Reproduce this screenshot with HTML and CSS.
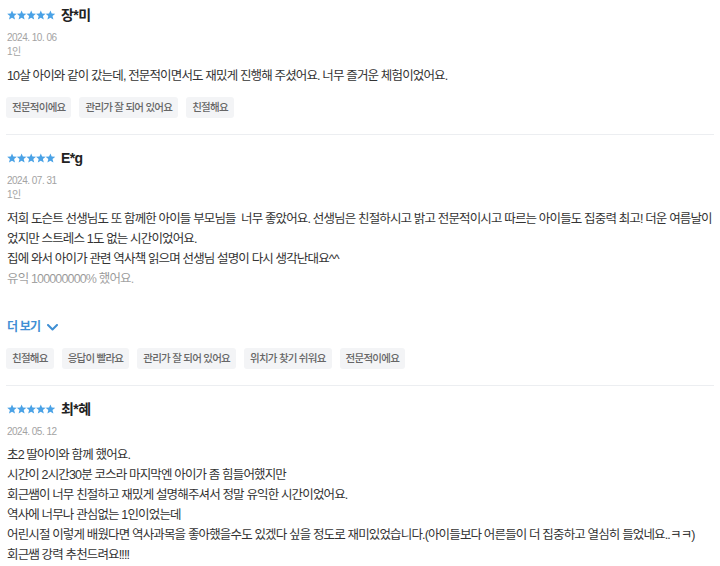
FILE: index.html
```html
<!DOCTYPE html>
<html lang="ko">
<head>
<meta charset="utf-8">
<title>후기</title>
<link rel="stylesheet" href="styles.css">
</head>
<body>
<div class="reviews">
  <section class="review">
    <div class="head">
      <svg class="stars" viewBox="0 0 48 10" width="48" height="10"><g fill="#4aa2e6"><polygon points="5,0.4 6.3,3.6 9.8,3.8 7.1,6.1 8,9.6 5,7.7 2,9.6 2.9,6.1 0.2,3.8 3.7,3.6"/><polygon transform="translate(9.6 0)" points="5,0.4 6.3,3.6 9.8,3.8 7.1,6.1 8,9.6 5,7.7 2,9.6 2.9,6.1 0.2,3.8 3.7,3.6"/><polygon transform="translate(19.2 0)" points="5,0.4 6.3,3.6 9.8,3.8 7.1,6.1 8,9.6 5,7.7 2,9.6 2.9,6.1 0.2,3.8 3.7,3.6"/><polygon transform="translate(28.8 0)" points="5,0.4 6.3,3.6 9.8,3.8 7.1,6.1 8,9.6 5,7.7 2,9.6 2.9,6.1 0.2,3.8 3.7,3.6"/><polygon transform="translate(38.4 0)" points="5,0.4 6.3,3.6 9.8,3.8 7.1,6.1 8,9.6 5,7.7 2,9.6 2.9,6.1 0.2,3.8 3.7,3.6"/></g></svg>
      <span class="name">장*미</span>
    </div>
    <div class="meta">
      <div>2024. 10. 06</div>
      <div>1인</div>
    </div>
    <div class="body">
      <p>10살 아이와 같이 갔는데, 전문적이면서도 재밌게 진행해 주셨어요. 너무 즐거운 체험이었어요.</p>
    </div>
    <ul class="tags">
      <li>전문적이에요</li>
      <li>관리가 잘 되어 있어요</li>
      <li>친절해요</li>
    </ul>
  </section>

  <section class="review">
    <div class="head">
      <svg class="stars" viewBox="0 0 48 10" width="48" height="10"><g fill="#4aa2e6"><polygon points="5,0.4 6.3,3.6 9.8,3.8 7.1,6.1 8,9.6 5,7.7 2,9.6 2.9,6.1 0.2,3.8 3.7,3.6"/><polygon transform="translate(9.6 0)" points="5,0.4 6.3,3.6 9.8,3.8 7.1,6.1 8,9.6 5,7.7 2,9.6 2.9,6.1 0.2,3.8 3.7,3.6"/><polygon transform="translate(19.2 0)" points="5,0.4 6.3,3.6 9.8,3.8 7.1,6.1 8,9.6 5,7.7 2,9.6 2.9,6.1 0.2,3.8 3.7,3.6"/><polygon transform="translate(28.8 0)" points="5,0.4 6.3,3.6 9.8,3.8 7.1,6.1 8,9.6 5,7.7 2,9.6 2.9,6.1 0.2,3.8 3.7,3.6"/><polygon transform="translate(38.4 0)" points="5,0.4 6.3,3.6 9.8,3.8 7.1,6.1 8,9.6 5,7.7 2,9.6 2.9,6.1 0.2,3.8 3.7,3.6"/></g></svg>
      <span class="name">E*g</span>
    </div>
    <div class="meta">
      <div>2024. 07. 31</div>
      <div>1인</div>
    </div>
    <div class="body clamp">
      <p>저희 도슨트 선생님도 또 함께한 아이들 부모님들&nbsp; 너무 좋았어요. 선생님은 친절하시고 밝고 전문적이시고 따르는 아이들도 집중력 최고! 더운 여름날이었지만 스트레스 1도 없는 시간이었어요.<br>집에 와서 아이가 관련 역사책 읽으며 선생님 설명이 다시 생각난대요^^<br>유익 100000000% 했어요.</p>
    </div>
    <button class="more" type="button">더 보기 <svg width="11" height="7" viewBox="0 0 11 7"><path d="M1 1 L5.5 5.5 L10 1" fill="none" stroke="#3f8fd4" stroke-width="2" stroke-linecap="round" stroke-linejoin="round"/></svg></button>
    <ul class="tags">
      <li>친절해요</li>
      <li>응답이 빨라요</li>
      <li>관리가 잘 되어 있어요</li>
      <li>위치가 찾기 쉬워요</li>
      <li>전문적이에요</li>
    </ul>
  </section>

  <section class="review">
    <div class="head">
      <svg class="stars" viewBox="0 0 48 10" width="48" height="10"><g fill="#4aa2e6"><polygon points="5,0.4 6.3,3.6 9.8,3.8 7.1,6.1 8,9.6 5,7.7 2,9.6 2.9,6.1 0.2,3.8 3.7,3.6"/><polygon transform="translate(9.6 0)" points="5,0.4 6.3,3.6 9.8,3.8 7.1,6.1 8,9.6 5,7.7 2,9.6 2.9,6.1 0.2,3.8 3.7,3.6"/><polygon transform="translate(19.2 0)" points="5,0.4 6.3,3.6 9.8,3.8 7.1,6.1 8,9.6 5,7.7 2,9.6 2.9,6.1 0.2,3.8 3.7,3.6"/><polygon transform="translate(28.8 0)" points="5,0.4 6.3,3.6 9.8,3.8 7.1,6.1 8,9.6 5,7.7 2,9.6 2.9,6.1 0.2,3.8 3.7,3.6"/><polygon transform="translate(38.4 0)" points="5,0.4 6.3,3.6 9.8,3.8 7.1,6.1 8,9.6 5,7.7 2,9.6 2.9,6.1 0.2,3.8 3.7,3.6"/></g></svg>
      <span class="name">최*혜</span>
    </div>
    <div class="meta meta-tight">
      <div>2024. 05. 12</div>
    </div>
    <div class="body">
      <p>초2 딸아이와 함께 했어요.<br>시간이 2시간30분 코스라 마지막엔 아이가 좀 힘들어했지만<br>회근쌤이 너무 친절하고 재밌게 설명해주셔서 정말 유익한 시간이었어요.<br>역사에 너무나 관심없는 1인이었는데<br>어린시절 이렇게 배웠다면 역사과목을 좋아했을수도 있겠다 싶을 정도로 재미있었습니다.(아이들보다 어른들이 더 집중하고 열심히 들었네요..ㅋㅋ)<br>회근쌤 강력 추천드려요!!!!</p>
    </div>
  </section>
</div>
</body>
</html>
```

FILE: styles.css
```css
* { box-sizing: border-box; }

html, body {
  margin: 0;
  padding: 0;
  background: #fff;
}

body {
  font-family: "Liberation Sans", "Noto Sans CJK KR", sans-serif;
  color: #333;
  overflow: hidden;
}

.reviews {
  padding: 0 6px;
}

.review {
  padding: 13px 0 16px;
  border-bottom: 1px solid #eceef1;
}

.review:first-child {
  padding-top: 5px;
}

.head {
  display: flex;
  align-items: center;
  height: 20px;
  padding-left: 1px;
}

.stars {
  display: block;
  margin-right: 6px;
}

.name {
  font-size: 14px;
  font-weight: 700;
  color: #222;
  letter-spacing: -0.6px;
  line-height: 20px;
}

.meta {
  margin-top: 6px;
  padding-left: 1px;
  font-size: 10px;
  letter-spacing: -0.5px;
  line-height: 13.5px;
  color: #a3a3a3;
}

.body {
  margin-top: 8px;
  padding-left: 1px;
  font-size: 12.5px;
  letter-spacing: -0.85px;
  line-height: 20px;
  color: #333;
}

.meta-tight + .body {
  margin-top: 6px;
}

.body p {
  margin: 0;
}

.clamp {
  position: relative;
  height: 80px;
  overflow: hidden;
}

.clamp::after {
  content: "";
  position: absolute;
  left: 0;
  right: 0;
  bottom: 0;
  height: 20px;
  background: linear-gradient(rgba(255,255,255,0.45), rgba(255,255,255,0.6));
}

.more {
  display: flex;
  align-items: center;
  gap: 7px;
  margin-top: 28px;
  padding: 0 0 0 1px;
  border: 0;
  background: none;
  font-family: inherit;
  font-size: 12px;
  font-weight: 700;
  letter-spacing: -0.8px;
  line-height: 20px;
  color: #3f8fd4;
}

.tags {
  display: flex;
  flex-wrap: wrap;
  gap: 8px;
  margin: 11px 0 0;
  padding: 0;
  list-style: none;
}

.tags li {
  height: 21px;
  padding: 0 6px;
  border-radius: 3px;
  background: #f3f4f6;
  font-size: 10.5px;
  font-weight: 500;
  letter-spacing: -0.75px;
  line-height: 21px;
  color: #666;
}
```
